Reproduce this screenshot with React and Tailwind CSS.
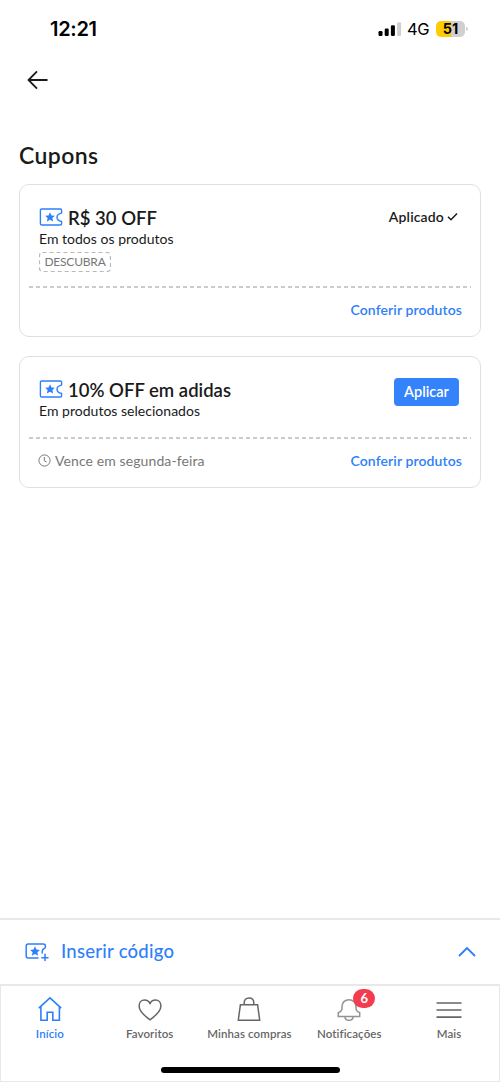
import React, { useState } from 'react'

const STAR = 'M0 -5L1.5 -1.8L4.9 -1.4L2.4 0.9L3.1 4.4L0 2.6L-3.1 4.4L-2.4 0.9L-4.9 -1.4L-1.5 -1.8Z'

const TicketIcon = () => (
  <svg width="24" height="20" viewBox="0 0 24 20" fill="none" stroke="#2e80fa" strokeWidth="1.4" strokeLinejoin="round">
    <path d="M2.7 1H21.4Q22.6 1 22.6 2.2V5.1Q18 5.9 18 9.3Q18 12.7 22.6 13.5V15.8Q22.6 17 21.4 17H2.7Q1.4 17 1.4 15.7V2.3Q1.4 1 2.7 1Z" />
    <path transform="translate(11 9.2)" d={STAR} fill="#2e80fa" stroke="none" />
  </svg>
)

const TicketPlusIcon = () => (
  <svg width="24" height="20" viewBox="0 0 24 20" fill="none" stroke="#2e80fa" strokeWidth="1.5" strokeLinecap="round" strokeLinejoin="round">
    <path d="M13 16.1H3.2Q1.2 16.1 1.2 14.1V3.9Q1.2 1.9 3.2 1.9H18.2Q20.4 1.9 20.4 3.9V5Q20.4 6 19.2 6.5Q17.2 7.5 17.2 9.8V11" />
    <path d="M20 12.3V18.5M16.8 15.7H23" />
    <path transform="translate(10 9.3)" d={STAR} fill="#2e80fa" stroke="none" />
  </svg>
)

const HomeIcon = () => (
  <svg width="26" height="26" viewBox="0 0 26 26" fill="none" stroke="currentColor" strokeWidth="1.6">
    <path d="M1.8 12.2L13 1.8L24.2 12.2M3.9 10.8V24.3H10.2V16.3H15.8V24.3H22.4V10.8" />
  </svg>
)

const HeartIcon = () => (
  <svg width="26" height="26" viewBox="0 0 26 26" fill="none" stroke="currentColor" strokeWidth="1.5" strokeLinejoin="round">
    <path d="M13 23.8C9 20.9 2.1 15.8 2.1 10C2.1 6.3 4.6 4 7.4 4C10 4 12 5.3 13 7.7C14 5.3 16 4 18.6 4C21.4 4 23.9 6.3 23.9 10C23.9 15.8 17 20.9 13 23.8Z" />
  </svg>
)

const BagIcon = () => (
  <svg width="26" height="26" viewBox="0 0 26 26" fill="none" stroke="currentColor" strokeWidth="1.5">
    <path d="M4.4 8.7H21.6L23.7 24.2H2.3ZM8.2 8.7V6.8C8.2 3.8 10 1.9 13 1.9C16 1.9 17.8 3.8 17.8 6.8V8.7" />
  </svg>
)

const BellIcon = () => (
  <svg width="26" height="26" viewBox="0 0 26 26" fill="none" stroke="#929292" strokeWidth="1.5">
    <path d="M2.3 20.6V16.6C4.9 15.6 6 14.4 6 12.2V10.4C6 6.5 8.9 3.7 13 3.7C17.1 3.7 20 6.5 20 10.4V12.2C20 14.4 21.1 15.6 23.7 16.6V20.6ZM8.8 20.8C9 23 10.5 24.3 13 24.3C15.5 24.3 17 23 17.2 20.8" />
  </svg>
)

const MenuIcon = () => (
  <svg width="26" height="26" viewBox="0 0 26 26" stroke="currentColor" strokeWidth="1.7">
    <path d="M0.5 7H25.5M0.5 14H25.5M0.5 21.2H25.5" />
  </svg>
)

const coupons = [
  { id: 1, title: 'R$ 30 OFF', subtitle: 'Em todos os produtos', code: 'DESCUBRA', applied: true },
  { id: 2, title: '10% OFF em adidas', subtitle: 'Em produtos selecionados', expires: 'Vence em segunda-feira' },
]

const tabs = [
  { id: 'home', label: 'Início', Icon: HomeIcon },
  { id: 'fav', label: 'Favoritos', Icon: HeartIcon },
  { id: 'orders', label: 'Minhas compras', Icon: BagIcon },
  { id: 'notifications', label: 'Notificações', Icon: BellIcon, badge: 6 },
  { id: 'more', label: 'Mais', Icon: MenuIcon },
]

const StatusBar = () => (
  <div className="h-[58px] pl-[50px] pr-[35px] flex items-center justify-between font-['Inter',sans-serif] text-black">
    <span className="text-[20px] font-semibold tracking-[-0.3px]">12:21</span>
    <div className="flex items-center">
      <svg width="24" height="16" viewBox="0 0 24 16">
        <rect x="0.5" y="10" width="4" height="5" rx="1.2" />
        <rect x="6.7" y="7.5" width="4" height="7.5" rx="1.2" />
        <rect x="12.9" y="4.3" width="4" height="10.7" rx="1.2" />
        <rect x="19.1" y="1.2" width="4" height="13.8" rx="1.2" fill="#d0d0d0" />
      </svg>
      <span className="ml-[5px] w-[22px] text-[16.5px] tracking-[-0.4px]">4G</span>
      <div className="relative ml-[7px] w-[29px] h-[16px] rounded-[5px] bg-[linear-gradient(90deg,#fecb07_52%,#d0d0d0_52%)] flex items-center justify-center text-[14.5px] font-bold">
        51
        <span className="absolute -right-[3px] top-[6px] w-[2px] h-[4px] rounded-r-full bg-[#d0d0d0]"></span>
      </div>
    </div>
  </div>
)

const CouponCard = ({ coupon, applied, onApply }) => (
  <div className="rounded-[10px] border border-[#e0e0e0] px-[9px]">
    <div className={`flex justify-between pl-[10px] ${coupon.code ? 'h-[101px]' : 'h-[80px]'}`}>
      <div className="pt-[21px]">
        <div className="h-[24px] flex items-center gap-[5px]">
          <TicketIcon />
          <span className="text-[18.5px] font-semibold leading-[24px]">{coupon.title}</span>
        </div>
        <p className="text-[14px] leading-[18px] tracking-[0.02px]">{coupon.subtitle}</p>
        {coupon.code && (
          <div className="relative mt-[4px] w-[72px] h-[20px] flex items-center justify-center text-[12px] leading-[20px] tracking-[-0.2px] text-[#777]">
            <svg className="absolute inset-0" width="72" height="20" fill="none" stroke="#b9b9b9">
              <rect x="0.5" y="0.5" width="71" height="19" rx="3" strokeDasharray="4 3" strokeWidth="1.2" />
            </svg>
            {coupon.code}
          </div>
        )}
      </div>
      {applied ? (
        <div className="h-[20px] mt-[21px] mr-[13px] flex items-center gap-[3px] text-[14px] font-semibold tracking-[0.15px]">
          Aplicado
          <svg width="11" height="10" viewBox="0 0 11 10" fill="none" stroke="currentColor" strokeWidth="1.5">
            <path d="M1 5.8L4 8.8L10 2.6" />
          </svg>
        </div>
      ) : (
        <button onClick={onApply} className="w-[65px] h-[28px] mt-[21px] mr-[12px] rounded-[4px] bg-[#3483fa] text-white text-[14.5px] font-semibold">Aplicar</button>
      )}
    </div>
    <div className="h-[2px] bg-[repeating-linear-gradient(90deg,#cbcbcb_0_4px,transparent_4px_7px)]"></div>
    <div className="h-[48px] pb-[6px] pl-[9px] pr-[9px] flex items-center justify-between">
      <span className="flex items-center gap-[4px] text-[14px] tracking-[0.1px] text-[#777]">
        {coupon.expires && (
          <>
            <svg width="13" height="13" viewBox="0 0 13 13" fill="none" stroke="currentColor" strokeWidth="1">
              <circle cx="6.5" cy="6.5" r="5.6" />
              <path d="M6.3 3V6.8L8.7 8" />
            </svg>
            {coupon.expires}
          </>
        )}
      </span>
      <a href="#" className="text-[14px] font-semibold tracking-[0.1px] text-[#2e80fa]">Conferir produtos</a>
    </div>
  </div>
)

const App = () => {
  const [applied, setApplied] = useState(1)
  const [tab, setTab] = useState('home')

  return (
    <div className="w-[500px] h-[1082px] bg-white flex flex-col overflow-hidden font-['Lato',sans-serif] text-[#1a1a1a]">
      <StatusBar />

      <header className="h-[44px] pl-[27px] flex items-center">
        <button aria-label="Voltar">
          <svg width="21" height="20" viewBox="0 0 21 20" fill="none" stroke="currentColor" strokeWidth="1.8">
            <path d="M20.5 10H1.5M10 1.4L1.5 10L10 18.6" />
          </svg>
        </button>
      </header>

      <main className="flex-1 px-[19px] pt-[39px]">
        <h1 className="h-[28px] text-[23px] leading-[28px] font-semibold tracking-[0.4px]">Cupons</h1>
        <div className="mt-[15px] space-y-[19px]">
          {coupons.map(c => (
            <CouponCard key={c.id} coupon={c} applied={applied === c.id} onApply={() => setApplied(c.id)} />
          ))}
        </div>
      </main>

      <button className="h-[66px] border-t-2 border-[#e8e8e8] pl-[25px] pr-[24px] flex items-center text-[#2e80fa]">
        <TicketPlusIcon />
        <span className="ml-[12px] flex-1 text-left text-[18.5px] font-medium tracking-[0.25px]">Inserir código</span>
        <svg width="18" height="12" viewBox="0 0 18 12" fill="none" stroke="currentColor" strokeWidth="1.9">
          <path d="M1 10L9 2L17 10" />
        </svg>
      </button>

      <nav className="h-[98px] border border-t-2 border-[#e8e8e8] flex flex-col justify-between">
        <div className="-ml-px grid grid-cols-5 pt-[10px]">
          {tabs.map(({ id, label, Icon, badge }) => (
            <button key={id} onClick={() => setTab(id)} className={`flex flex-col items-center ${tab === id ? 'text-[#2e80fa]' : 'text-[#666]'}`}>
              <span className="relative">
                <Icon />
                {badge && (
                  <span className="absolute -top-[7px] left-[17px] w-[22px] h-[19px] rounded-full bg-[#f23d4f] text-white text-[13px] font-bold leading-[19px] text-center">{badge}</span>
                )}
              </span>
              <span className="mt-[4px] text-[11.5px] leading-[16px] font-semibold tracking-[0.1px] whitespace-nowrap">{label}</span>
            </button>
          ))}
        </div>
        <div className="self-center mb-[8px] w-[179px] h-[6px] rounded-full bg-black"></div>
      </nav>
    </div>
  )
}

export default App
